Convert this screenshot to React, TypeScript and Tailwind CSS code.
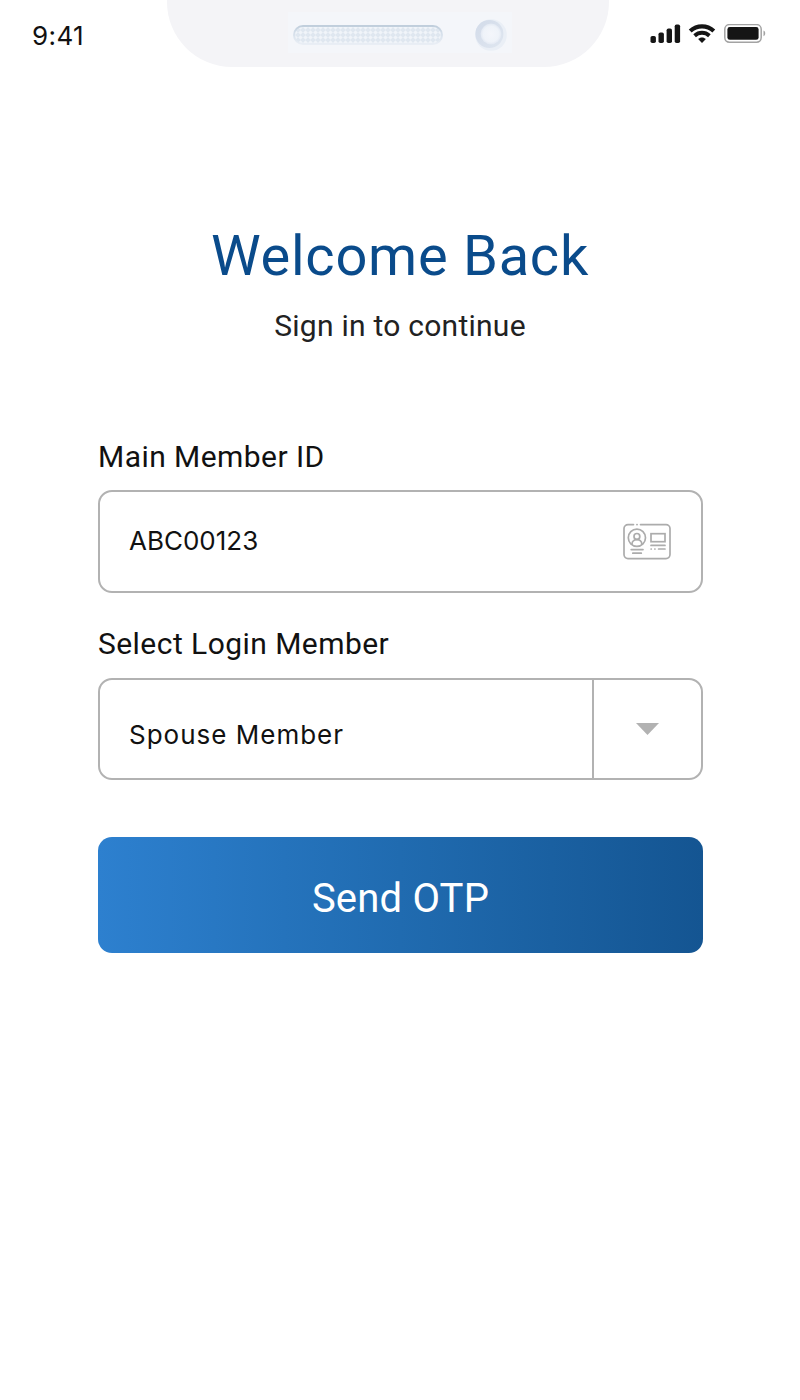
import { useState, FormEvent } from 'react'

function SignalIcon() {
  return (
    <svg width="31" height="20" viewBox="0 0 31 20" fill="#151515">
      <rect x="0.5" y="12" width="5.4" height="7" rx="1.8" />
      <rect x="8.5" y="8.5" width="5.4" height="10.5" rx="1.8" />
      <rect x="16.6" y="4.5" width="5.4" height="14.5" rx="1.8" />
      <rect x="24.7" y="0.5" width="5.4" height="18.5" rx="1.8" />
    </svg>
  )
}

function WifiIcon() {
  return (
    <svg width="28" height="20" viewBox="0 0 28 20" fill="none">
      <path d="M2.2 7C9 0.8 19 0.8 25.8 7" stroke="#151515" strokeWidth="4.2" />
      <path d="M6.6 11.7C11 7.8 17 7.8 21.4 11.7" stroke="#151515" strokeWidth="3.9" />
      <path d="M10.1 15.1C12.3 13 15.7 13 17.9 15.1L14 19Z" fill="#151515" />
    </svg>
  )
}

function BatteryIcon() {
  return (
    <svg width="42" height="20" viewBox="0 0 42 20" fill="none">
      <rect x="0.8" y="0.6" width="36.4" height="17.6" rx="4.6" stroke="#a3a3a3" strokeWidth="1.5" />
      <rect x="3.4" y="3" width="31.2" height="12.8" rx="2.4" fill="#151515" />
      <path d="M39.5 6.6C41.8 7.4 41.8 11.4 39.5 12.2Z" fill="#a3a3a3" />
    </svg>
  )
}

function IdCardIcon() {
  return (
    <svg
      width="48"
      height="37"
      viewBox="0 0 48 37"
      fill="none"
      stroke="#acacac"
      strokeWidth="1.7"
      strokeLinecap="round"
    >
      <path d="M10.5 1.6H5A4 4 0 0 0 1 5.6V31.6A4 4 0 0 0 5 35.6H43A4 4 0 0 0 47 31.6V5.6A4 4 0 0 0 43 1.6H17.5" />
      <path d="M13.9 1.6h.2" />
      <circle cx="13.9" cy="14.8" r="8.6" />
      <circle cx="13.9" cy="13.4" r="2.9" />
      <path d="M9 21C9 15.2 18.8 15.2 18.8 21" />
      <path d="M8.2 26.6H20M9.8 30.2H18.3" />
      <rect x="28" y="10.7" width="14" height="8" strokeLinejoin="miter" />
      <path d="M28 22.4H42M28.1 26h.2M31.8 26h.2M35.6 26H42" />
    </svg>
  )
}

function Notch() {
  return (
    <div className="flex h-[67px] w-[442px] items-start rounded-b-[65px] bg-[#f4f4f7] pt-3 pl-[121px]">
      <div className="flex h-[41px] w-[224px] items-center bg-[#f4f6fa] pt-1 pl-[5px]">
        <svg width="150" height="20" viewBox="0 0 150 20">
          <defs>
            <pattern id="mesh" width="5" height="5" patternUnits="userSpaceOnUse">
              <rect width="5" height="5" fill="#dfe7f0" />
              <path d="M2.5 0.2L4.8 2.5L2.5 4.8L0.2 2.5Z" fill="#f0f4f9" />
            </pattern>
            <linearGradient id="slot" x1="0" y1="0" x2="0" y2="1">
              <stop offset="0" stopColor="#c0cedc" />
              <stop offset="0.4" stopColor="#d6e0eb" />
              <stop offset="1" stopColor="#e9eef5" />
            </linearGradient>
          </defs>
          <rect x="1" y="1" width="148" height="18" rx="9" fill="url(#mesh)" stroke="url(#slot)" strokeWidth="2" />
        </svg>
        <svg className="ml-[30px]" width="34" height="34" viewBox="0 0 34 34">
          <defs>
            <linearGradient id="lens" x1="0" y1="0" x2="1" y2="1">
              <stop offset="0" stopColor="#d2dbe9" />
              <stop offset="1" stopColor="#dfe6f0" />
            </linearGradient>
            <radialGradient id="glass">
              <stop offset="0" stopColor="#f4f6fb" />
              <stop offset="0.75" stopColor="#eff3f9" />
              <stop offset="1" stopColor="#e3e9f3" />
            </radialGradient>
          </defs>
          <circle cx="18" cy="17" r="15.8" fill="#eaeff6" />
          <circle cx="16.4" cy="16" r="14" fill="url(#lens)" />
          <circle cx="18" cy="16" r="10.4" fill="url(#glass)" />
        </svg>
      </div>
    </div>
  )
}

function StatusBar() {
  return (
    <header className="flex h-[67px] items-start">
      <div className="w-[167px] pt-[18px] pl-8 font-['Inter',sans-serif] text-[26px] leading-9 tracking-[0.4px] text-[#111]">9:41</div>
      <Notch />
      <div className="flex pt-6 pl-[41px]">
        <SignalIcon />
        <div className="ml-[7px]">
          <WifiIcon />
        </div>
        <div className="ml-2">
          <BatteryIcon />
        </div>
      </div>
    </header>
  )
}

export default function App() {
  const [memberId, setMemberId] = useState('ABC00123')

  const handleSubmit = (e: FormEvent) => {
    e.preventDefault()
  }

  return (
    <div className="min-h-[1400px] w-[800px] bg-white font-['Roboto',sans-serif]">
      <StatusBar />

      <main className="px-[98px] pt-[157px]">
        {/* Heading */}
        <div className="text-center">
          <h1 className="text-[56px] leading-[64px] tracking-[0.75px] text-[#0a4b8b]">Welcome Back</h1>
          <p className="mt-5 text-[30px] leading-9 tracking-[0.25px] text-[#222]">Sign in to continue</p>
        </div>

        <form onSubmit={handleSubmit} className="mt-[95px]">
          <label htmlFor="memberId" className="block text-[30px] leading-9 tracking-[0.45px] text-[#111]">
            Main Member ID
          </label>
          <div className="mt-[15px] flex h-[103px] w-[605px] items-center rounded-[14px] border-2 border-[#b2b2b2] pr-[30px] pl-[29px]">
            <input
              id="memberId"
              type="text"
              value={memberId}
              onChange={e => setMemberId(e.target.value)}
              className="min-w-0 flex-1 bg-transparent pb-[3px] font-['Inter',sans-serif] text-[26px] text-[#111] outline-none"
            />
            <IdCardIcon />
          </div>

          <p className="mt-[33px] text-[30px] leading-9 tracking-[0.45px] text-[#111]">Select Login Member</p>
          <button
            type="button"
            className="mt-4 flex h-[102px] w-[605px] rounded-[14px] border-2 border-[#b2b2b2] text-left"
          >
            <span className="flex-1 self-center pt-2.5 pl-[29px] font-['Inter',sans-serif] text-[26px] tracking-[1px] text-[#111]">
              Spouse Member
            </span>
            <span className="flex h-full w-[109px] items-center justify-center border-l-2 border-[#b2b2b2]">
              <svg width="23" height="12" viewBox="0 0 23 12">
                <path d="M0 0H23L11.5 12Z" fill="#b2b2b2" />
              </svg>
            </span>
          </button>

          <button
            type="submit"
            className="mt-[57px] h-[116px] w-[605px] rounded-[14px] bg-linear-to-r/srgb from-[#2d80cf] via-[#206bb0] to-[#145592] pt-2 text-[40px] tracking-[0.2px] text-white"
          >
            Send OTP
          </button>
        </form>
      </main>
    </div>
  )
}
